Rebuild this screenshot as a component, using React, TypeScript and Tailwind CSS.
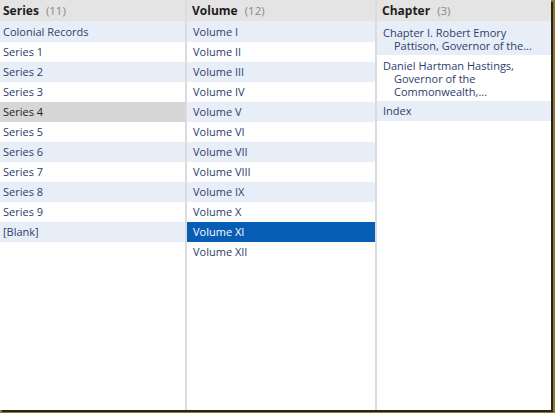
import React from 'react'

const series = ['Colonial Records', 'Series 1', 'Series 2', 'Series 3', 'Series 4', 'Series 5', 'Series 6', 'Series 7', 'Series 8', 'Series 9', '[Blank]']
const volumes = ['Volume I', 'Volume II', 'Volume III', 'Volume IV', 'Volume V', 'Volume VI', 'Volume VII', 'Volume VIII', 'Volume IX', 'Volume X', 'Volume XI', 'Volume XII']
const chapters = [
  'Chapter I. Robert Emory Pattison, Governor of the...',
  'Daniel Hartman Hastings, Governor of the Commonwealth,...',
  'Index',
]

type Sel = 'none' | 'active' | 'inactive'

function Header({ title, count, pad }: { title: string; count: number; pad: string }) {
  return (
    <div className={`h-[22px] bg-[#e4e4e4] flex items-center gap-[7px] ${pad} border-b border-[#ececec]`}>
      <span className="font-bold text-[12px] text-[#1e1e1e]">{title}</span>
      <span className="text-[11.5px] text-[#8a8a8a]">({count})</span>
    </div>
  )
}

function Row({ label, idx, sel, wrap, pad }: { label: string; idx: number; sel: Sel; wrap?: boolean; pad: string }) {
  let bg = idx % 2 === 0 ? 'bg-[#e8eef8]' : 'bg-white'
  let color = 'text-[#2d3d6a]'
  if (sel === 'active') {
    bg = 'bg-[#075cb4]'
    color = 'text-white'
  } else if (sel === 'inactive') {
    bg = 'bg-[#d6d6d6]'
    color = 'text-[#222]'
  }
  return (
    <div
      className={`${bg} ${color} ${
        wrap ? 'pt-[4px] pb-[3px] pl-[17px] -indent-[11px] pr-[6px] leading-[13px]' : `h-[20px] flex items-center ${pad}`
      }`}
    >
      {label}
    </div>
  )
}

export default function App() {
  return (
    <div className="w-[555px] h-[413px] bg-[#8c7431] relative">
      <div className="w-[551px] h-[410px] bg-white flex text-[11px] shadow-[2px_2px_0_#2a2416] font-['Open_Sans',sans-serif]">
        {/* Series */}
        <div className="w-[187px] flex flex-col border-r-2 border-[#dcdcdc]">
          <Header title="Series" count={11} pad="px-[3px]" />
          {series.map((s, i) => (
            <Row key={s} label={s} idx={i} pad="px-[3px]" sel={s === 'Series 4' ? 'inactive' : 'none'} />
          ))}
        </div>
        {/* Volume */}
        <div className="w-[190px] flex flex-col border-r-2 border-[#dcdcdc]">
          <Header title="Volume" count={12} pad="px-[5px]" />
          {volumes.map((v, i) => (
            <Row key={v} label={v} idx={i} pad="px-[6px]" sel={v === 'Volume XI' ? 'active' : 'none'} />
          ))}
        </div>
        {/* Chapter */}
        <div className="flex-1 flex flex-col">
          <Header title="Chapter" count={3} pad="px-[5px]" />
          {chapters.map((c, i) => (
            <Row key={c} label={c} idx={i} pad="px-[6px]" sel="none" wrap={c !== 'Index'} />
          ))}
        </div>
      </div>
    </div>
  )
}
